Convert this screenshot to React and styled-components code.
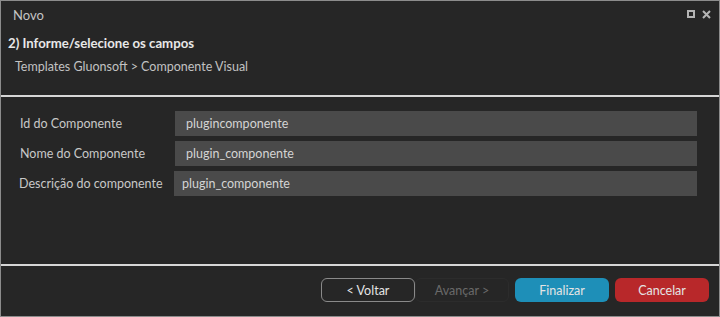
import React from 'react';
import styled, { createGlobalStyle } from 'styled-components';

const Global = createGlobalStyle`
  html, body { margin: 0; padding: 0; background: #262626; }
  body { font-family: "Lato", "Open Sans", sans-serif; }
`

const Window = styled.div`
  width: 720px;
  height: 317px;
  box-sizing: border-box;
  border: 1px solid #8c8c8c;
  background: #262626;
  display: flex;
  flex-direction: column;
  color: #c8c8c8;
`

const TitleBar = styled.div`
  height: 27px;
  display: flex;
  align-items: center;
  padding: 0 8px 0 12px;
  font-size: 13px;
  color: #c4c4c4;
`

const Title = styled.div`
  flex: 1;
`

const WinButtons = styled.div`
  display: flex;
  gap: 7px;
  align-items: center;
  margin-bottom: 1px;
`

const Heading = styled.div`
  padding: 7px 0 0 7px;
  font-size: 13.2px;
  font-weight: bold;
  color: #e8e8e8;
`

const Crumb = styled.div`
  padding: 8px 0 0 14px;
  font-size: 12.5px;
  color: #c2c2c2;
`

const Sep = styled.div`
  height: 2px;
  background: #d6d6d6;
  margin-top: ${p => p.top}px;
`

const Form = styled.div`
  padding: 14px 22px 0 18px;
  display: flex;
  flex-direction: column;
  gap: 5px;
  flex: 1;
`

const Row = styled.div`
  display: flex;
  align-items: center;
  height: 25px;
`

const Label = styled.div`
  width: 155px;
  font-size: 12.5px;
  color: #c8c8c8;
  padding-left: ${p => p.indent ?? 1}px;
`

const Field = styled.div`
  flex: 1;
  height: 25px;
  background: #4a4a4a;
  display: flex;
  align-items: center;
  padding-left: ${p => p.indent || 9}px;
  font-size: 12.5px;
  color: #d4d4d4;
`

const Footer = styled.div`
  height: 48px;
  display: flex;
  justify-content: flex-end;
  align-items: center;
  gap: 6px;
  padding: 0 10px 2px 0;
`

const Button = styled.div`
  width: ${p => p.w || 94}px;
  height: 24px;
  box-sizing: border-box;
  border-radius: 6px;
  display: flex;
  align-items: center;
  justify-content: center;
  font-size: 12.5px;
  background: ${p => p.bg || 'transparent'};
  border: 1px solid ${p => p.line || 'transparent'};
  color: ${p => p.fg || '#e4e4e4'};
`

const App = () => {
  return (
    <Window>
      <Global />
      <TitleBar>
        <Title>Novo</Title>
        <WinButtons>
          <svg width="8" height="8" viewBox="0 0 8 8">
            <rect x="1" y="1" width="6" height="6" fill="none" stroke="#b4b4b4" strokeWidth="2" />
          </svg>
          <svg width="9" height="9" viewBox="0 0 9 9">
            <path d="M1 1L8 8M8 1L1 8" stroke="#b4b4b4" strokeWidth="2" />
          </svg>
        </WinButtons>
      </TitleBar>
      <Heading>2) Informe/selecione os campos</Heading>
      <Crumb>Templates Gluonsoft &gt; Componente Visual</Crumb>
      <Sep top={21} />
      <Form>
        <Row>
          <Label>Id do Componente</Label>
          <Field indent={11}>plugincomponente</Field>
        </Row>
        <Row>
          <Label>Nome do Componente</Label>
          <Field indent={11}>plugin_componente</Field>
        </Row>
        <Row>
          <Label indent={0}>Descrição do componente</Label>
          <Field indent={8}>plugin_componente</Field>
        </Row>
      </Form>
      <Sep top={0} />
      <Footer>
        <Button line="#8a8a8a">&lt; Voltar</Button>
        <Button line="#2c2c2c" fg="#6a6a6a" style={{ marginLeft: -6 }}>Avançar &gt;</Button>
        <Button bg="#1e8fb8">Finalizar</Button>
        <Button bg="#b8282a">Cancelar</Button>
      </Footer>
    </Window>
  )
}

export default App;
